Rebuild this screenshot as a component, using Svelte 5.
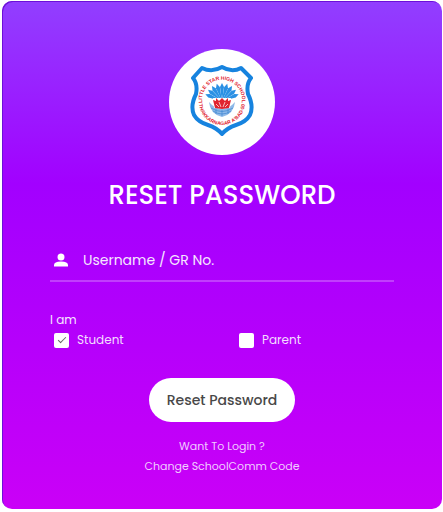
<script>
  let username = "";
  let student = true;
  let parent = false;

  // upper half of the burst behind the lotus
  const rays = [-68, -51, -34, -17, 0, 17, 34, 51, 68];
</script>

<form class="card" on:submit|preventDefault>
  <div class="logo">
    <svg viewBox="0 0 106 106" role="img" aria-label="Little Star High School">
      <defs>
        <path id="arc-top" d="M34 57 A20 20 0 1 1 72 57" />
        <path id="arc-bottom" d="M30 53 A23 23 0 0 0 76 53" />
      </defs>
      <path
        class="shield"
        d="M33 19 Q43 24 53 18 Q63 24 72 19 L82 29 Q77 35 79 45 Q85 57 81 66 Q77 73 67 76 Q58 79 53 85 Q48 79 39 76 Q29 73 25 66 Q21 57 27 45 Q29 35 24 29 Z"
      />
      <g class="rays">
        {#each rays as angle}
          <path d="M53 52 L51 38 L53 34 L55 38 Z" transform="rotate({angle} 53 52)" />
        {/each}
      </g>
      <path class="globe" d="M40 53 Q41 65 53 68 Q65 65 66 53 Q60 60 53 60 Q46 60 40 53 Z" />
      <path class="waves" d="M42 59 Q53 66 64 59 M44 62 Q53 68 62 62 M47 60 V65 M53 61 V67 M59 60 V65" />
      <path class="lotus-base" d="M44 49 H62 L61 59 H45 Z" />
      <path
        class="lotus"
        d="M53 49 L56 52 L59 49 L59 52 L62 51 L60 59 L53 60 L46 59 L44 51 L47 52 L47 49 L50 52 Z"
      />
      <path class="petals" d="M50 53 L52 58 M56 53 L54 58 M47 55 L50 58 M59 55 L56 58" />
      <text class="crest">
        <textPath href="#arc-top" startOffset="50%" text-anchor="middle">LITTLE STAR HIGH SCHOOL</textPath>
      </text>
      <text class="crest">
        <textPath href="#arc-bottom" startOffset="50%" text-anchor="middle">THAKKARNAGAR A'BAD-50</textPath>
      </text>
    </svg>
  </div>

  <h1>RESET PASSWORD</h1>

  <div class="field">
    <svg class="user" viewBox="0 0 16 16" aria-hidden="true">
      <circle cx="8" cy="5" r="3.5" />
      <path d="M1 14.5 V13 Q1 9.5 8 9.5 Q15 9.5 15 13 V14.5 Z" />
    </svg>
    <input type="text" bind:value={username} placeholder="Username / GR No." aria-label="Username / GR No." />
  </div>

  <fieldset>
    <legend>I am</legend>
    <div class="options">
      <label><input type="checkbox" bind:checked={student} />Student</label>
      <label><input type="checkbox" bind:checked={parent} />Parent</label>
    </div>
  </fieldset>

  <button type="submit">Reset Password</button>

  <nav>
    <a href="#login">Want To Login ?</a>
    <a href="#code">Change SchoolComm Code</a>
  </nav>
</form>

<style>
:global(body) {
  background: #fff;
}

.card {
  margin: 1px 1px 3px 2px;
  padding: 48px 48px 33px;
  display: flex;
  flex-direction: column;
  align-items: center;
  border-radius: 10px;
  box-shadow: inset 1px 1px 0 #6c10d8;
  background: linear-gradient(#913fff 0%, #a200ff 36%, #ca00f7 100%);
  color: #fff;
  font-family: Poppins, Inter, sans-serif;
}

.logo {
  width: 106px;
  height: 106px;
  border-radius: 50%;
  background: #fff;
}

.logo svg {
  display: block;
}

.shield {
  fill: #fff;
  stroke: #1683df;
  stroke-width: 4;
  stroke-linejoin: round;
}

.rays {
  fill: #2a90e4;
}

.globe {
  fill: #8fb9e8;
}

.waves {
  fill: none;
  stroke: #3f86d2;
  stroke-width: 0.7;
}

.lotus-base {
  fill: #fff;
}

.lotus {
  fill: #e02430;
}

.petals {
  stroke: #fff;
  stroke-width: 0.7;
}

.crest {
  fill: #e0182c;
  font-family: "Liberation Sans", sans-serif;
  font-size: 5px;
  font-weight: 700;
}

h1 {
  margin: 20px 0 32px;
  font-size: 26px;
  font-weight: 500;
  line-height: 40px;
  white-space: nowrap;
}

.field {
  align-self: stretch;
  display: flex;
  align-items: center;
  height: 25px;
  padding: 0 3px 8px;
  border-bottom: 2px solid rgba(255, 255, 255, 0.24);
}

.user {
  width: 16px;
  height: 16px;
  margin-right: 14px;
  flex: none;
  fill: #fff;
}

.field input {
  flex: 1;
  min-width: 0;
  padding: 0;
  border: 0;
  outline: none;
  background: transparent;
  color: #fff;
  font: 14px/24px Poppins, Inter, sans-serif;
}

.field input::placeholder {
  color: #f6e6ff;
  opacity: 1;
}

fieldset {
  align-self: stretch;
  min-width: 0;
  margin: 28px 0 0;
  padding: 0;
  border: 0;
}

legend {
  padding: 0;
  font-size: 12px;
  line-height: 20px;
  color: #f6e6ff;
}

.options {
  display: grid;
  grid-template-columns: 185px 1fr;
  padding-left: 4px;
}

label {
  display: flex;
  align-items: center;
  gap: 8px;
  font-size: 12px;
  line-height: 20px;
  color: #f3dcff;
}

label input {
  appearance: none;
  display: grid;
  place-items: center;
  width: 15px;
  height: 15px;
  margin: 0;
  border-radius: 2px;
  background: #fff;
}

label input:checked::before {
  content: "";
  width: 3px;
  height: 7px;
  margin-bottom: 2px;
  border: solid #666;
  border-width: 0 1px 1px 0;
  transform: rotate(45deg);
}

button {
  height: 44px;
  margin: 28px 0 14px;
  padding: 0 18px;
  border: 0;
  border-radius: 22px;
  background: #fff;
  color: #484848;
  font: 500 14px/20px Poppins, Inter, sans-serif;
  cursor: pointer;
}

nav {
  display: flex;
  flex-direction: column;
  align-items: center;
}

a {
  font-size: 11px;
  line-height: 20px;
  color: #f0ccff;
  text-decoration: none;
}
</style>
